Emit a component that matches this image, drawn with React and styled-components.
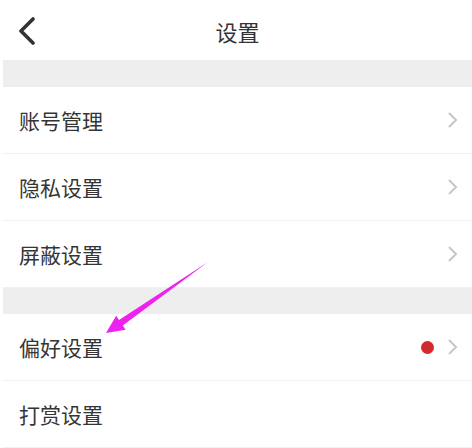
import React from "react";
import styled, { createGlobalStyle } from "styled-components";

const GlobalStyle = createGlobalStyle`
  html, body {
    margin: 0;
    padding: 0;
    background: #ffffff;
  }
  body {
    font-family: "Noto Sans CJK SC", "Noto Sans", sans-serif;
  }
`;

const Page = styled.div`
  position: relative;
  width: 472px;
  height: 448px;
  padding-left: 3px;
  box-sizing: border-box;
  overflow: hidden;
  background: #fff;
`;

const Header = styled.div`
  position: relative;
  height: 60px;
  display: flex;
  align-items: center;
  justify-content: center;
`;

const BackButton = styled.div`
  position: absolute;
  left: 15px;
  top: 17px;
  width: 17px;
  height: 28px;
  display: flex;
`;

const Title = styled.div`
  font-size: 22px;
  color: #333;
  line-height: 1;
  margin-top: 2px;
`;

const Band = styled.div`
  height: ${props => props.h}px;
  background: #eeeeee;
`;

const Row = styled.div`
  height: 66px;
  display: flex;
  align-items: center;
  padding: 0 14px 0 16px;
  border-bottom: 1px solid #f0f0f0;
`;

const Label = styled.div`
  flex-grow: 1;
  font-size: 21px;
  color: #353535;
  line-height: 1;
  margin-top: 0;
`;

const Dot = styled.span`
  width: 13px;
  height: 13px;
  border-radius: 50%;
  background: #d22b2b;
  margin-right: 13px;
`;

const Overlay = styled.svg`
  position: absolute;
  left: 0;
  top: 0;
  pointer-events: none;
`;

const Chevron = () => (
  <svg width="11" height="16" viewBox="0 0 11 16">
    <polyline
      points="2,1 9,8 2,15"
      fill="none"
      stroke="#c6c6c6"
      strokeWidth="2"
    />
  </svg>
);

const ITEMS = [
  [
    { name: "账号管理", arrow: true },
    { name: "隐私设置", arrow: true },
    { name: "屏蔽设置", arrow: true }
  ],
  [
    { name: "偏好设置", arrow: true, dot: true },
    { name: "打赏设置", arrow: false }
  ]
];

const App = () => {
  return (
    <Page>
      <GlobalStyle />
      <Header>
        <BackButton>
          <svg width="17" height="28" viewBox="0 0 17 28">
            <polyline
              points="15,2 3,14 15,26"
              fill="none"
              stroke="#333"
              strokeWidth="3.6"
              strokeLinecap="round"
              strokeLinejoin="round"
            />
          </svg>
        </BackButton>
        <Title>设置</Title>
      </Header>

      <Band h={27} />
      {ITEMS[0].map(item => (
        <Row key={item.name}>
          <Label>{item.name}</Label>
          {item.dot && <Dot />}
          {item.arrow && <Chevron />}
        </Row>
      ))}
      <Band h={26} />
      {ITEMS[1].map(item => (
        <Row key={item.name}>
          <Label>{item.name}</Label>
          {item.dot && <Dot />}
          {item.arrow && <Chevron />}
        </Row>
      ))}

      {/* annotation arrow drawn over the list */}
      <Overlay width="472" height="448" viewBox="0 0 472 448">
        <polygon
          points="208,262 122.8,325.6 125.6,329.8 106,333 116.2,315.8 119,320"
          fill="#ee22ee"
        />
      </Overlay>
    </Page>
  );
};

export default App;
